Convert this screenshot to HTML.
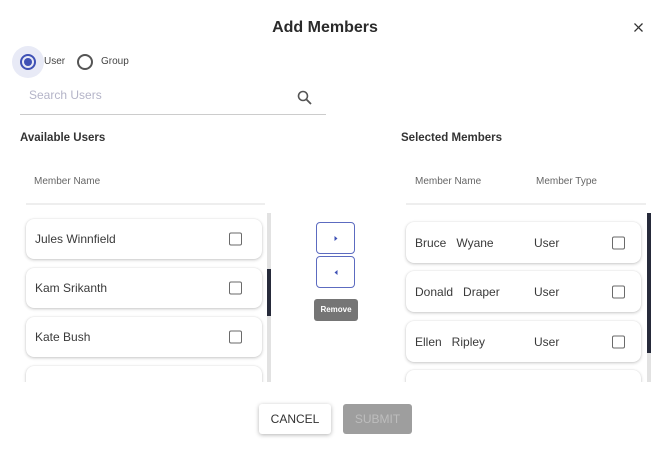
<!DOCTYPE html>
<html><head><style>
*{box-sizing:border-box;margin:0;padding:0}
body{width:670px;height:451px;background:#fff;font-family:"Liberation Sans",sans-serif;position:relative;overflow:hidden;color:#333}
.a{position:absolute;white-space:nowrap}
.card{position:absolute;background:#fff;border-radius:8px;box-shadow:0 1px 3px rgba(0,0,0,.22),0 0 1px rgba(0,0,0,.12);font-size:12px;color:#3a3a3a}
.card span{position:absolute;top:50%;transform:translateY(-50%)}
.cb{position:absolute;width:13px;height:13px;border:1.8px solid #6a6a6a;border-radius:2px;top:50%;transform:translateY(-50%)}
.clip{position:absolute;overflow:hidden}
.btn{position:absolute;border:1px solid #5c6bc0;border-radius:4px;width:39px;height:32px}
</style></head><body>
<div class="a" style="left:0;width:650px;text-align:center;top:19px;font-size:16px;font-weight:bold;color:#2a2a2a">Add Members</div>
<svg class="a" style="left:634px;top:23px" width="9" height="9"><path d="M0.5 0.5L8.5 8.5M8.5 0.5L0.5 8.5" stroke="#333" stroke-width="1.3"/></svg>
<div class="a" style="left:12px;top:46px;width:32px;height:32px;border-radius:50%;background:#e8eaf6"></div>
<div class="a" style="left:20px;top:54px;width:16px;height:16px;border-radius:50%;border:2px solid #3f51b5"></div>
<div class="a" style="left:24px;top:58px;width:8px;height:8px;border-radius:50%;background:#3f51b5"></div>
<div class="a" style="left:44px;top:56px;font-size:10px;color:#444">User</div>
<div class="a" style="left:77px;top:54px;width:16px;height:16px;border-radius:50%;border:2px solid #555"></div>
<div class="a" style="left:101px;top:56px;font-size:10px;color:#444">Group</div>
<div class="a" style="left:29px;top:88px;font-size:12px;color:#b4b4c8">Search Users</div>
<svg class="a" style="left:297px;top:90px" width="16" height="16"><circle cx="6" cy="6" r="4.5" fill="none" stroke="#555" stroke-width="1.6"/><path d="M9.5 9.5L14 14" stroke="#555" stroke-width="1.8"/></svg>
<div class="a" style="left:20px;top:114px;width:306px;height:1px;background:#ccc"></div>
<div class="a" style="left:20px;top:132px;font-size:11.5px;font-weight:bold;color:#333">Available Users</div>
<div class="a" style="left:34px;top:176px;font-size:10px;color:#666">Member Name</div>
<div class="a" style="left:26px;top:203px;width:239px;height:2px;background:#eee"></div>
<div class="clip" style="left:20px;top:212px;width:255px;height:170px">
<div class="card" style="left:6px;top:7px;width:236px;height:40px"><span style="left:9px">Jules Winnfield</span><div class="cb" style="left:203px"></div></div>
<div class="card" style="left:6px;top:56px;width:236px;height:40px"><span style="left:9px">Kam Srikanth</span><div class="cb" style="left:203px"></div></div>
<div class="card" style="left:6px;top:105px;width:236px;height:40px"><span style="left:9px">Kate Bush</span><div class="cb" style="left:203px"></div></div>
<div class="card" style="left:6px;top:154px;width:236px;height:40px"></div>
<div class="a" style="left:247px;top:1px;width:4px;height:169px;background:#e2e2e2"></div>
<div class="a" style="left:247px;top:57px;width:4px;height:47px;background:#262a3a"></div>
</div>
<div class="btn" style="left:316px;top:222px"><svg class="a" style="left:16px;top:12px" width="6" height="7"><path d="M1.5 1L4.5 3.5L1.5 6Z" fill="#3f51b5"/></svg></div>
<div class="btn" style="left:316px;top:256px"><svg class="a" style="left:16px;top:12px" width="6" height="7"><path d="M4.5 1L1.5 3.5L4.5 6Z" fill="#3f51b5"/></svg></div>
<div class="a" style="left:314px;top:299px;width:44px;height:22px;background:#757575;border-radius:3px;color:#fff;font-size:8px;font-weight:bold;text-align:center;line-height:22px">Remove</div>
<div class="a" style="left:401px;top:132px;font-size:11.5px;font-weight:bold;color:#333">Selected Members</div>
<div class="a" style="left:415px;top:176px;font-size:10px;color:#666">Member Name</div>
<div class="a" style="left:536px;top:176px;font-size:10px;color:#666">Member Type</div>
<div class="a" style="left:406px;top:203px;width:240px;height:2px;background:#eee"></div>
<div class="clip" style="left:400px;top:212px;width:255px;height:170px">
<div class="card" style="left:6px;top:10px;width:235px;height:41px"><span style="left:9px">Bruce&nbsp;&nbsp;&nbsp;Wyane</span><span style="left:128px">User</span><div class="cb" style="left:206px"></div></div>
<div class="card" style="left:6px;top:59px;width:235px;height:41px"><span style="left:9px">Donald&nbsp;&nbsp;&nbsp;Draper</span><span style="left:128px">User</span><div class="cb" style="left:206px"></div></div>
<div class="card" style="left:6px;top:109px;width:235px;height:41px"><span style="left:9px">Ellen&nbsp;&nbsp;&nbsp;Ripley</span><span style="left:128px">User</span><div class="cb" style="left:206px"></div></div>
<div class="card" style="left:6px;top:158px;width:235px;height:41px"></div>
<div class="a" style="left:247px;top:1px;width:4px;height:169px;background:#e2e2e2"></div>
<div class="a" style="left:247px;top:1px;width:4px;height:140px;background:#262a3a"></div>
</div>
<div class="a" style="left:259px;top:404px;width:72px;height:30px;background:#fff;border-radius:3px;box-shadow:0 1px 4px rgba(0,0,0,.3);font-size:12px;color:#333;text-align:center;line-height:30px">CANCEL</div>
<div class="a" style="left:343px;top:404px;width:69px;height:30px;background:#9e9e9e;border-radius:3px;font-size:12px;color:#bdbdbd;text-align:center;line-height:30px">SUBMIT</div>
</body></html>
